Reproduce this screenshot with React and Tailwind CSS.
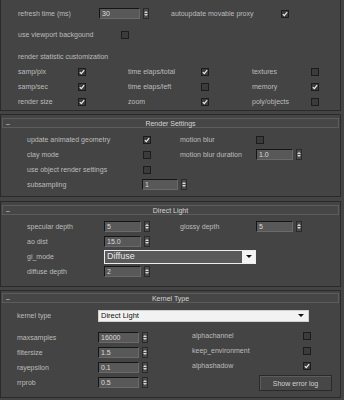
import React from "react";

const Check = ({ on }) => (
  <span className="w-[8px] h-[8px] shrink-0 border border-[#1c1c1c] bg-[#3b3b3b] flex items-center justify-center">
    {on && (
      <svg width="6" height="6" viewBox="0 0 6 6">
        <path d="M0.8 3.2 L2.3 4.7 L5.2 1.2" stroke="#f2f2f2" strokeWidth="1.1" fill="none" />
      </svg>
    )}
  </span>
);

const Spin = ({ value, w = "w-[41px]" }) => (
  <span className="flex items-center shrink-0">
    <span className={`${w} h-[11px] bg-[#585858] border-t border-l border-[#151515] border-b-[#6a6a6a] border-r-[#6a6a6a] border-b border-r flex items-center pl-[2px] text-[#dcdcdc]`}>
      {value}
    </span>
    <span className="ml-[3px] w-[6px] h-[11px] bg-[#4c4c4c] border border-[#2a2a2a] flex flex-col items-center justify-center gap-[1px]">
      <svg width="4" height="2" viewBox="0 0 4 2"><path d="M0 2 L2 0 L4 2Z" fill="#d8d8d8" /></svg>
      <svg width="4" height="2" viewBox="0 0 4 2"><path d="M0 0 L4 0 L2 2Z" fill="#d8d8d8" /></svg>
    </span>
  </span>
);

const Header = ({ title }) => (
  <div className="mx-[1px] h-[10px] border border-[#5c5c5c] bg-[#464646] relative flex items-center justify-center text-[#d4d4d4]">
    <span className="absolute left-[3px] top-[1px] text-[#d4d4d4]">–</span>
    <span>{title}</span>
  </div>
);

const Row = ({ children, className = "" }) => (
  <div className={`flex items-center h-[15px] ${className}`}>{children}</div>
);

export default function App() {
  return (
    <div
      className="w-[344px] h-[400px] bg-[#444444] overflow-hidden text-[#bcbcbc] text-[7px] leading-none"
      style={{ fontFamily: '"Liberation Sans", Arial, sans-serif' }}
    >
      {/* Panel 1 */}
      <div className="h-[111px] mr-[3px] border-b border-r border-l border-[#2a2a2a] flex flex-col pt-[6px]">
        <Row className="pl-[17px]">
          <span className="w-[81px]">refresh time (ms)</span>
          <Spin value="30" />
          <span className="ml-[22px] w-[110px]">autoupdate movable proxy</span>
          <Check on />
        </Row>
        <Row className="pl-[17px] mt-[6px]">
          <span className="w-[103px]">use viewport backgound</span>
          <Check />
        </Row>
        <Row className="pl-[17px] mt-[7px]">
          <span>render statistic customization</span>
        </Row>
        {[
          ["samp/pix", true, "time elaps/total", true, "textures", false],
          ["samp/sec", true, "time elaps/left", false, "memory", true],
          ["render size", true, "zoom", true, "poly/objects", false],
        ].map((r) => (
          <Row key={r[0]} className="pl-[17px]">
            <span className="w-[60px]">{r[0]}</span>
            <Check on={r[1]} />
            <span className="ml-[42px] w-[73px]">{r[2]}</span>
            <Check on={r[3]} />
            <span className="ml-[43px] w-[59px]">{r[4]}</span>
            <Check on={r[5]} />
          </Row>
        ))}
      </div>

      {/* Panel 2 */}
      <div className="mt-[3px] h-[83px] mr-[3px] border border-[#2a2a2a] pt-[3px] flex flex-col">
        <Header title="Render Settings" />
        <Row className="pl-[26px] mt-[4px]">
          <span className="w-[116px]">update animated geometry</span>
          <Check on />
          <span className="ml-[29px] w-[76px]">motion blur</span>
          <Check />
        </Row>
        <Row className="pl-[26px]">
          <span className="w-[116px]">clay mode</span>
          <Check />
          <span className="ml-[29px] w-[76px]">motion blur duration</span>
          <Spin value="1.0" w="w-[37px]" />
        </Row>
        <Row className="pl-[26px]">
          <span className="w-[116px]">use object render settings</span>
          <Check />
        </Row>
        <Row className="pl-[26px]">
          <span className="w-[115px]">subsampling</span>
          <Spin value="1" w="w-[36px]" />
        </Row>
      </div>

      {/* Panel 3 */}
      <div className="mt-[4px] h-[86px] mr-[3px] border border-[#2a2a2a] pt-[3px] flex flex-col">
        <Header title="Direct Light" />
        <Row className="pl-[26px] mt-[4px]">
          <span className="w-[77px]">specular depth</span>
          <Spin value="5" w="w-[37px]" />
          <span className="ml-[30px] w-[76px]">glossy depth</span>
          <Spin value="5" w="w-[37px]" />
        </Row>
        <Row className="pl-[26px]">
          <span className="w-[77px]">ao dist</span>
          <Spin value="15.0" w="w-[37px]" />
        </Row>
        <Row className="pl-[26px]">
          <span className="w-[77px]">gi_mode</span>
          <span className="w-[152px] h-[14px] border border-[#ededed] bg-[#5a5a5a] flex items-stretch">
            <span className="flex-1 flex items-center pl-[2px] text-[9px] text-[#e8e8e8]">Diffuse</span>
            <span className="w-[13px] bg-[#f4f4f4] flex items-center justify-center">
              <svg width="6" height="3" viewBox="0 0 6 3"><path d="M0 0 L6 0 L3 3Z" fill="#111" /></svg>
            </span>
          </span>
        </Row>
        <Row className="pl-[26px]">
          <span className="w-[77px]">diffuse depth</span>
          <Spin value="2" w="w-[37px]" />
        </Row>
      </div>

      {/* Panel 4 */}
      <div className="mt-[3px] h-[108px] mr-[3px] border border-[#2a2a2a] pt-[2px] flex flex-col">
        <Header title="Kernel Type" />
        <Row className="pl-[16px] mt-[5px]">
          <span className="w-[81px]">kernel type</span>
          <span className="w-[211px] h-[12px] bg-[#f2f2f2] border border-[#cfcfcf] flex items-center pl-[2px] text-[#111] text-[7.5px]">
            <span className="flex-1">Direct Light</span>
            <svg className="mr-[4px]" width="6" height="3" viewBox="0 0 6 3"><path d="M0 0 L6 0 L3 3Z" fill="#111" /></svg>
          </span>
        </Row>
        <div className="flex mt-[7px]">
          <div className="flex flex-col pl-[16px]">
            {[["maxsamples", "16000"], ["filtersize", "1.5"], ["rayepsilon", "0.1"], ["rrprob", "0.5"]].map((r) => (
              <div key={r[0]} className="flex items-center h-[15px]">
                <span className="w-[81px]">{r[0]}</span>
                <Spin value={r[1]} />
              </div>
            ))}
          </div>
          <div className="flex flex-col ml-[44px] -mt-[2px]">
            {[["alphachannel", false], ["keep_environment", false], ["alphashadow", true]].map((r) => (
              <div key={r[0]} className="flex items-center h-[15px]">
                <span className="w-[111px]">{r[0]}</span>
                <Check on={r[1]} />
              </div>
            ))}
            <div className="ml-[67px] mt-[2px] w-[73px] h-[16px] bg-[#474747] border border-[#2a2a2a] shadow-[inset_1px_1px_0_#5c5c5c] flex items-center justify-center text-[#d0d0d0]">
              Show error log
            </div>
          </div>
        </div>
      </div>
    </div>
  );
}
